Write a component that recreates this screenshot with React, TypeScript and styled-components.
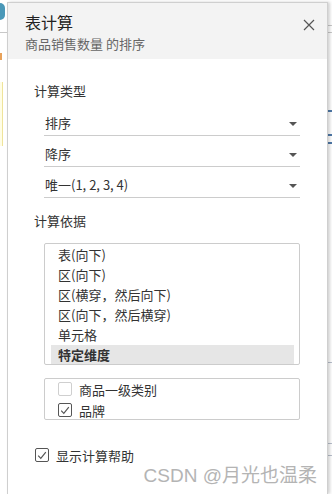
import React from 'react';
import styled, { createGlobalStyle } from 'styled-components';

const GlobalStyle = createGlobalStyle`
    html, body {
        margin: 0;
        padding: 0;
        background: #ffffff;
        overflow: hidden;
    }
    body {
        font-family: 'Noto Sans CJK SC', 'Noto Sans', sans-serif;
        color: #333333;
    }
`;

const Stage = styled.div`
    display: flex;
    width: 332px;
    height: 494px;
    overflow: hidden;
    background: #ffffff;
`;

const Strip = styled.div<{ $w: number }>`
    display: flex;
    flex-direction: column;
    width: ${(p) => p.$w}px;
    flex-shrink: 0;
`;

const Tick = styled.div<{ $gap: number; $h: number; $w?: number; $color: string }>`
    margin-top: ${(p) => p.$gap}px;
    height: ${(p) => p.$h}px;
    width: ${(p) => (p.$w ? `${p.$w}px` : '100%')};
    background: ${(p) => p.$color};
    flex-shrink: 0;
`;

const HalfDot = styled.div`
    margin-top: 3px;
    width: 5px;
    height: 17px;
    border-radius: 0 9px 9px 0;
    background: #4a98b8;
`;

const NoteBox = styled.div`
    margin-top: 22px;
    width: 2px;
    height: 64px;
    background: #fffde6;
    border-right: 1px solid #efe49a;
`;

const Panel = styled.div`
    position: relative;
    width: 319px;
    margin-top: 2px;
    border: 1px solid #cfcfcf;
    border-bottom: none;
    background: #ffffff;
    box-shadow: 2px 0 3px rgba(0, 0, 0, 0.18);
    display: flex;
    flex-direction: column;
    flex-shrink: 0;
`;

const Header = styled.div`
    display: flex;
    justify-content: space-between;
    height: 56px;
    box-sizing: border-box;
    padding: 8px 11px 0 17px;
    background: #f3f3f3;
`;

const Title = styled.div`
    font-size: 16px;
    line-height: 22px;
    color: #222222;
`;

const Subtitle = styled.div`
    font-size: 13px;
    line-height: 18px;
    color: #666666;
    margin-top: 2px;
`;

const CloseButton = styled.button`
    width: 15px;
    height: 15px;
    margin-top: 6px;
    padding: 0;
    border: none;
    background: none;
    display: flex;
    align-items: center;
    justify-content: center;
`;

const Body = styled.div`
    display: flex;
    flex-direction: column;
    padding: 23px 0 0 26px;
`;

const SectionLabel = styled.div<{ $gap?: number }>`
    font-size: 13px;
    line-height: 18px;
    margin-top: ${(p) => p.$gap || 0}px;
    color: #333333;
`;

const Select = styled.div<{ $gap?: number }>`
    display: flex;
    justify-content: space-between;
    align-items: flex-start;
    width: 256px;
    height: 31px;
    box-sizing: border-box;
    margin-left: 10px;
    margin-top: ${(p) => p.$gap || 0}px;
    padding: 9px 3px 0 1px;
    border-bottom: 1px solid #cccccc;
    font-size: 13px;
    line-height: 18px;
    color: #333333;
`;

const Caret = styled.span`
    width: 0;
    height: 0;
    margin-top: 8px;
    border-left: 4px solid transparent;
    border-right: 4px solid transparent;
    border-top: 4px solid #555555;
`;

const Box = styled.div<{ $gap: number; $h: number }>`
    width: 256px;
    height: ${(p) => p.$h}px;
    box-sizing: border-box;
    margin-left: 10px;
    margin-top: ${(p) => p.$gap}px;
    border: 1px solid #cccccc;
    border-radius: 2px;
    overflow: hidden;
`;

const List = styled.div`
    display: flex;
    flex-direction: column;
    padding: 1px 5px 0 6px;
`;

const ListRow = styled.div<{ $active?: boolean }>`
    height: 20px;
    line-height: 20px;
    padding-left: 7px;
    font-size: 13px;
    color: #333333;
    font-weight: ${(p) => (p.$active ? 700 : 400)};
    background: ${(p) => (p.$active ? '#e6e6e6' : 'transparent')};
`;

const CheckList = styled.div`
    display: flex;
    flex-direction: column;
    gap: 7px;
    padding: 3px 0 0 13px;
`;

const CheckRow = styled.label<{ $gap?: number; $indent?: number }>`
    display: flex;
    align-items: center;
    gap: 7px;
    height: 14px;
    margin-top: ${(p) => p.$gap || 0}px;
    margin-left: ${(p) => p.$indent || 0}px;
    font-size: 13px;
    color: #333333;
`;

const Check = styled.span<{ $on?: boolean }>`
    width: 14px;
    height: 14px;
    box-sizing: border-box;
    border: 1px solid ${(p) => (p.$on ? '#555555' : '#cfcfcf')};
    border-radius: 2px;
    background: #ffffff;
    display: flex;
    align-items: center;
    justify-content: center;
    flex-shrink: 0;
`;

const Watermark = styled.div`
    align-self: flex-end;
    margin: 4px 10px 0 0;
    font-family: 'Liberation Sans', 'Noto Sans CJK SC', sans-serif;
    font-size: 19px;
    line-height: 20px;
    color: #b4b4b4;
    white-space: nowrap;
`;

const Tickmark = () => (
    <svg width="10" height="9" viewBox="0 0 10 9">
        <path d="M1.2 4.6 L3.8 7.3 L8.8 1.2" fill="none" stroke="#555" strokeWidth="1.2" />
    </svg>
);

const basisItems = ['表(向下)', '区(向下)', '区(横穿，然后向下)', '区(向下，然后横穿)', '单元格', '特定维度'];

export default function App() {
    return (
        <Stage>
            <GlobalStyle />
            <Strip $w={7}>
                <HalfDot />
                <Tick $gap={12} $h={1} $color="#c8c8c8" />
                <Tick $gap={20} $h={7} $w={2} $color="#e8a25a" />
                <NoteBox />
            </Strip>
            <Panel>
                <Header>
                    <div>
                        <Title>表计算</Title>
                        <Subtitle>商品销售数量 的排序</Subtitle>
                    </div>
                    <CloseButton aria-label="关闭">
                        <svg width="12" height="12" viewBox="0 0 12 12">
                            <path d="M1 1 L11 11 M11 1 L1 11" stroke="#555" strokeWidth="1.2" />
                        </svg>
                    </CloseButton>
                </Header>
                <Body>
                    <SectionLabel>计算类型</SectionLabel>
                    <Select $gap={5}>
                        排序
                        <Caret />
                    </Select>
                    <Select>
                        降序
                        <Caret />
                    </Select>
                    <Select>
                        唯一(1, 2, 3, 4)
                        <Caret />
                    </Select>
                    <SectionLabel $gap={14}>计算依据</SectionLabel>
                    <Box $gap={13} $h={122}>
                        <List>
                            {basisItems.map((item, i) => (
                                <ListRow key={item} $active={i === basisItems.length - 1}>
                                    {item}
                                </ListRow>
                            ))}
                        </List>
                    </Box>
                    <Box $gap={13} $h={42}>
                        <CheckList>
                            <CheckRow>
                                <Check />
                                商品一级类别
                            </CheckRow>
                            <CheckRow>
                                <Check $on>
                                    <Tickmark />
                                </Check>
                                品牌
                            </CheckRow>
                        </CheckList>
                    </Box>
                    <CheckRow $gap={28} $indent={1}>
                        <Check $on>
                            <Tickmark />
                        </Check>
                        显示计算帮助
                    </CheckRow>
                    <Watermark>CSDN @月光也温柔</Watermark>
                </Body>
            </Panel>
            <Strip $w={5}>
                <Tick $gap={25} $h={1} $color="#c8c8c8" />
                <Tick $gap={6} $h={1} $color="#c8c8c8" />
                <Tick $gap={77} $h={2} $color="#4f79a8" />
                <Tick $gap={22} $h={2} $color="#4f79a8" />
                <Tick $gap={6} $h={2} $color="#4f79a8" />
                <Tick $gap={218} $h={1} $color="#b8bfcc" />
                <Tick $gap={80} $h={1} $color="#b8bfcc" />
                <Tick $gap={11} $h={1} $color="#b8bfcc" />
            </Strip>
        </Stage>
    );
}
